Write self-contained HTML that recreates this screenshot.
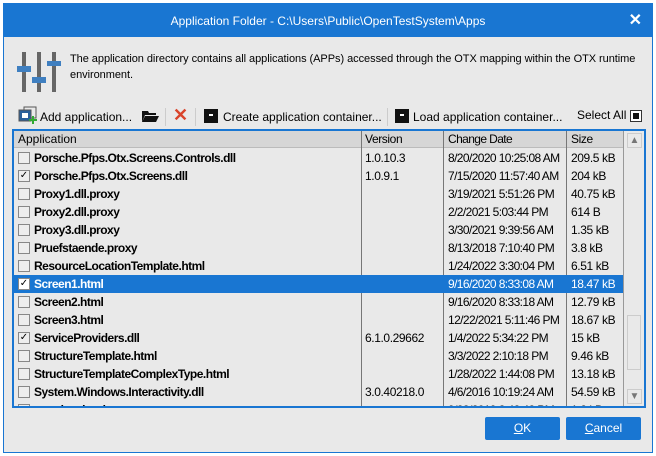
<!DOCTYPE html><html><head><style>
*{margin:0;padding:0;box-sizing:border-box}
body{width:656px;height:456px;background:#fff;font-family:"Liberation Sans",sans-serif;font-size:12px;position:relative;overflow:hidden}
.win{position:absolute;left:3px;top:3px;width:650px;height:450px;background:#e9e9e9;border:1px solid #1976d2}
.title{position:absolute;left:0;top:0;width:648px;height:33px;background:#1976d2;color:#fff;font-size:12px;text-align:center;line-height:34px}
.x{position:absolute;right:10px;top:0;font-size:16px;line-height:34px;font-weight:bold}
.a{position:absolute;white-space:nowrap}
.tbl{position:absolute;left:12px;top:129px;width:634px;height:279px;border:2px solid #1976d2;background:#e9e9e9;overflow:hidden}
.hd{position:absolute;left:0;top:0;width:609px;height:17px;background:#d6d6d6;border-bottom:1px solid #bbb}
.row{position:absolute;left:0;width:609px;height:18px;font-size:12px;line-height:18px}
.row span{position:absolute;white-space:nowrap}
.n{left:20px;font-weight:bold;letter-spacing:-0.5px;font-size:12px}
.cb{position:absolute;left:4px;top:3px;width:12px;height:12px;border:1px solid #888;background:#eee;font-size:10px;line-height:10px;text-align:center;color:#000}
.v{left:351px;letter-spacing:-0.4px}.d{left:434px;letter-spacing:-0.6px}.s{left:557px;letter-spacing:-0.4px}
.sel{background:#1976d2;color:#fff}
.vl{position:absolute;top:0;width:1px;height:279px;background:#777}
.btn{position:absolute;top:417px;height:23px;background:#1976d2;color:#fff;text-align:center;line-height:23px;border-radius:2px}
</style></head><body>
<div class="win">
<div class="title">Application Folder - C:\Users\Public\OpenTestSystem\Apps<span class="x">✕</span></div>
<div class="a" style="left:66px;top:47px;font-size:11px;letter-spacing:-0.05px;line-height:16px">The application directory contains all applications (APPs) accessed through the OTX mapping within the OTX runtime<br>environment.</div>
<svg class="a" style="left:14px;top:102px" width="22" height="19"><rect x="6" y="1" width="12" height="11" fill="none" stroke="#555"/><rect x="1" y="4" width="12" height="11" fill="#2a5f9a" stroke="#555"/><rect x="4" y="7" width="6" height="5" fill="#fff"/><path d="M15 10v8M11 14h8" stroke="#3a3" stroke-width="2"/></svg>
<div class="a" style="left:36px;top:106px">Add application...</div>
<svg class="a" style="left:137px;top:106px" width="18" height="13"><path d="M1 1h6l1 2h7v2H4L1 12z" fill="#111"/><path d="M4 6h14l-3 6H1z" fill="#111"/></svg>
<div class="a" style="left:161px;top:104px;width:1px;height:18px;background:#ccc"></div>
<div class="a" style="left:169px;top:101px;font-size:18px;color:#d9442b;font-weight:bold">✕</div>
<div class="a" style="left:191px;top:104px;width:1px;height:18px;background:#ccc"></div>
<div class="a" style="left:200px;top:105px;width:14px;height:14px;background:#111"><div style="position:absolute;left:5px;top:5px;width:4px;height:2px;background:#fff"></div></div>
<div class="a" style="left:219px;top:106px">Create application container...</div>
<div class="a" style="left:383px;top:104px;width:1px;height:18px;background:#ccc"></div>
<div class="a" style="left:391px;top:105px;width:14px;height:14px;background:#111"><div style="position:absolute;left:5px;top:5px;width:4px;height:2px;background:#fff"></div></div>
<div class="a" style="left:409px;top:106px">Load application container...</div>
<div class="a" style="left:573px;top:104px">Select All</div>
<div class="a" style="left:626px;top:106px;width:12px;height:12px;border:1px solid #333;background:#fff"><div style="position:absolute;left:2px;top:2px;width:6px;height:6px;background:#111"></div></div>
</div>
<svg class="a" style="left:0;top:0" width="70" height="100"><g fill="#666"><rect x="22" y="52" width="4" height="40"/><rect x="37" y="52" width="4" height="40"/><rect x="52" y="52" width="4" height="40"/></g><g fill="#3f7fc0"><rect x="17" y="66" width="14" height="6"/><rect x="32" y="77" width="14" height="6"/><rect x="47" y="61" width="14" height="5"/></g></svg>
<div class="tbl">
<div class="hd"></div>
<div class="row" style="top:0;height:17px;line-height:17px"><span style="left:4px">Application</span><span class="v">Version</span><span class="d">Change Date</span><span class="s">Size</span></div>
<div class="vl" style="left:347px"></div><div class="vl" style="left:429px"></div><div class="vl" style="left:552px"></div><div class="vl" style="left:609px;background:#999"></div>
<div class="row" style="top:18px"><div class="cb"></div><span class="n">Porsche.Pfps.Otx.Screens.Controls.dll</span><span class="v">1.0.10.3</span><span class="d">8/20/2020 10:25:08 AM</span><span class="s">209.5 kB</span></div>
<div class="row" style="top:36px"><div class="cb">✓</div><span class="n">Porsche.Pfps.Otx.Screens.dll</span><span class="v">1.0.9.1</span><span class="d">7/15/2020 11:57:40 AM</span><span class="s">204 kB</span></div>
<div class="row" style="top:54px"><div class="cb"></div><span class="n">Proxy1.dll.proxy</span><span class="d">3/19/2021 5:51:26 PM</span><span class="s">40.75 kB</span></div>
<div class="row" style="top:72px"><div class="cb"></div><span class="n">Proxy2.dll.proxy</span><span class="d">2/2/2021 5:03:44 PM</span><span class="s">614 B</span></div>
<div class="row" style="top:90px"><div class="cb"></div><span class="n">Proxy3.dll.proxy</span><span class="d">3/30/2021 9:39:56 AM</span><span class="s">1.35 kB</span></div>
<div class="row" style="top:108px"><div class="cb"></div><span class="n">Pruefstaende.proxy</span><span class="d">8/13/2018 7:10:40 PM</span><span class="s">3.8 kB</span></div>
<div class="row" style="top:126px"><div class="cb"></div><span class="n">ResourceLocationTemplate.html</span><span class="d">1/24/2022 3:30:04 PM</span><span class="s">6.51 kB</span></div>
<div class="row sel" style="top:144px"><div class="cb" style="background:#fff">✓</div><span class="n">Screen1.html</span><span class="d">9/16/2020 8:33:08 AM</span><span class="s">18.47 kB</span></div>
<div class="row" style="top:162px"><div class="cb"></div><span class="n">Screen2.html</span><span class="d">9/16/2020 8:33:18 AM</span><span class="s">12.79 kB</span></div>
<div class="row" style="top:180px"><div class="cb"></div><span class="n">Screen3.html</span><span class="d">12/22/2021 5:11:46 PM</span><span class="s">18.67 kB</span></div>
<div class="row" style="top:198px"><div class="cb">✓</div><span class="n">ServiceProviders.dll</span><span class="v">6.1.0.29662</span><span class="d">1/4/2022 5:34:22 PM</span><span class="s">15 kB</span></div>
<div class="row" style="top:216px"><div class="cb"></div><span class="n">StructureTemplate.html</span><span class="d">3/3/2022 2:10:18 PM</span><span class="s">9.46 kB</span></div>
<div class="row" style="top:234px"><div class="cb"></div><span class="n">StructureTemplateComplexType.html</span><span class="d">1/28/2022 1:44:08 PM</span><span class="s">13.18 kB</span></div>
<div class="row" style="top:252px"><div class="cb"></div><span class="n">System.Windows.Interactivity.dll</span><span class="v">3.0.40218.0</span><span class="d">4/6/2016 10:19:24 AM</span><span class="s">54.59 kB</span></div>
<div class="row" style="top:270px"><div class="cb"></div><span class="n">template.html</span><span class="d">9/23/2019 3:48:48 PM</span><span class="s">1.2 kB</span></div>
<div class="a" style="left:613px;top:2px;width:15px;height:15px;border:1px solid #ccc;font-size:10px;color:#777;text-align:center;line-height:13px">▲</div>
<div class="a" style="left:613px;top:184px;width:14px;height:55px;border:1px solid #ccc"></div>
<div class="a" style="left:613px;top:258px;width:15px;height:15px;border:1px solid #ccc;font-size:10px;color:#777;text-align:center;line-height:13px">▼</div>
</div>
<div class="btn" style="left:485px;width:75px"><u>O</u>K</div>
<div class="btn" style="left:566px;width:75px"><u>C</u>ancel</div>
</body></html>
